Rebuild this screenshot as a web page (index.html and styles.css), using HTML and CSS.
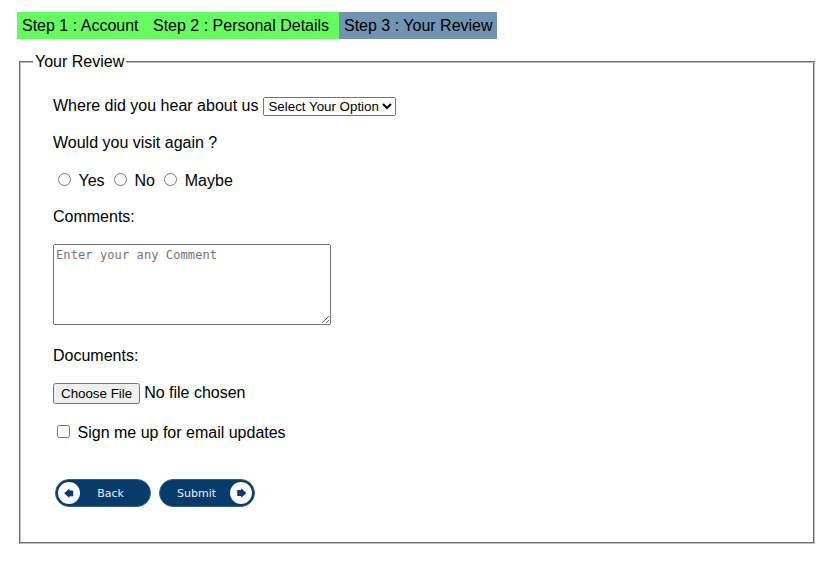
FILE: index.html
```html
<!DOCTYPE html>
<html lang="en">
<head>
<meta charset="utf-8">
<title>Your Review</title>
<link rel="stylesheet" href="styles.css">
</head>
<body>
<nav class="steps">
<span class="step done first">Step 1 : Account</span>
<span class="step done second">Step 2 : Personal Details</span>
<span class="step current">Step 3 : Your Review</span>
</nav>
<form>
<fieldset class="panel">
<legend>Your Review</legend>
<div class="row source"><label for="src">Where did you hear about us</label><select id="src"><option>Select Your Option</option></select></div>
<div class="row question">Would you visit again ?</div>
<div class="row radios">
<label><input type="radio" name="v">Yes</label>
<label><input type="radio" name="v">No</label>
<label><input type="radio" name="v">Maybe</label>
</div>
<div class="row comments">Comments:</div>
<textarea placeholder="Enter your any Comment"></textarea>
<div class="row documents">Documents:</div>
<div class="row file"><input type="file"></div>
<label class="row signup"><input type="checkbox">Sign me up for email updates</label>
<div class="actions">
<button type="button" class="pill back"><svg viewBox="0 0 22 22"><circle cx="11" cy="11" r="11"/><path d="M6.2 11.3l5.2-4.7v1.8h3.8v5.8h-3.8V16z"/></svg><span>Back</span></button>
<button type="button" class="pill submit"><span>Submit</span><svg viewBox="0 0 22 22"><circle cx="11" cy="11" r="11"/><path d="M16.4 11l-5.2-4.7v1.8H7.2v5.8h4v1.8z"/></svg></button>
</div>
</fieldset>
</form>
</body>
</html>
```
FILE: styles.css
```css
* { box-sizing: border-box; }
body {
  margin: 0;
  padding: 12px 17px 0;
  background: #fff;
  color: #000;
  font: 16px/18px "Liberation Sans", Arial, sans-serif;
}
.steps { display: flex; height: 27px; }
.step { padding: 5px; white-space: nowrap; line-height: 18px; }
.done { background: #66fc61; }
.current { background: #7393b3; }
.first { width: 131px; }
.second { width: 191px; }
.current { width: 158px; }
.panel {
  width: 796px;
  height: 491px;
  margin: 14px 0 0 2px;
  padding: 0 32px;
  border: 2px groove #c0c0c0;
}
legend { margin-left: -20px; padding: 0 2px; }
.row { display: flex; align-items: center; height: 20px; }
.source { margin-top: 25px; gap: 5px; }
select { width: 133px; height: 19px; padding: 0; font: 13.333px "Liberation Sans", Arial, sans-serif; }
.question { margin-top: 17px; }
.radios { margin-top: 18px; gap: 4.45px; }
.radios label { display: flex; align-items: center; }
.radios input { position: relative; top: -2px; margin: 0 7.45px 0 5px; }
.comments { margin-top: 16px; }
textarea {
  display: block;
  width: 278px;
  height: 81px;
  margin: 17px 0 0;
  padding: 3px 2px 2px;
  font: 12px/15px "DejaVu Sans Mono", monospace;
  letter-spacing: 0.1px;
}
.documents { margin-top: 21px; }
.file { margin-top: 17px; }
input[type="file"] { font: inherit; }
input[type="file"]::file-selector-button {
  height: 21px;
  font: 13.333px "Liberation Sans", Arial, sans-serif;
}
.signup { margin-top: 20px; }
.signup input { position: relative; top: -2px; margin: 0 7.5px 0 4px; }
.actions { display: flex; gap: 8px; margin: 36px 0 0 2px; }
.pill {
  display: flex;
  align-items: center;
  width: 96px;
  height: 28px;
  padding: 0 2px;
  border: 1px solid #3a5f83;
  border-radius: 14px;
  background: #073b6b;
  color: #e9eff5;
  font: 11px "DejaVu Sans", sans-serif;
}
.pill span { flex: 1; text-align: center; }
.back span { padding-right: 7px; }
.submit span { padding-left: 1px; }
.pill svg { width: 22px; height: 22px; fill: #fafafa; }
.pill path { fill: #073b6b; }
```
